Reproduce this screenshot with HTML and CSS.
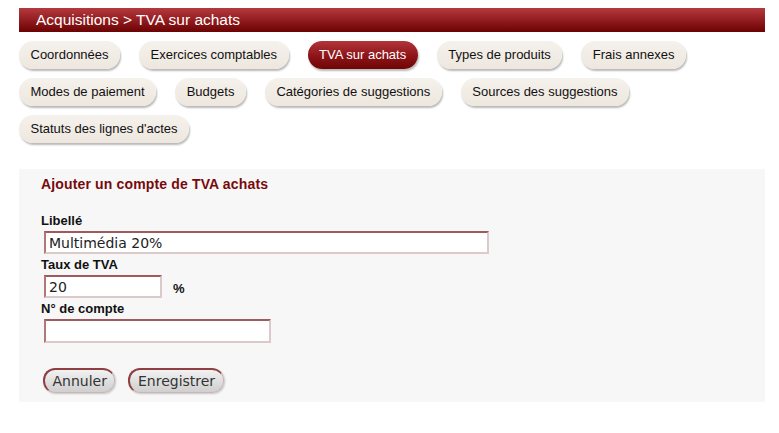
FILE: index.html
```html
<!DOCTYPE html>
<html lang="fr">
<head>
<meta charset="utf-8">
<title>TVA sur achats</title>
<link rel="stylesheet" href="styles.css">
</head>
<body>
<div class="page">
  <div class="titlebar">Acquisitions &gt; TVA sur achats</div>
  <nav class="tabs">
    <a class="tab">Coordonnées</a>
    <a class="tab">Exercices comptables</a>
    <a class="tab active">TVA sur achats</a>
    <a class="tab">Types de produits</a>
    <a class="tab">Frais annexes</a>
    <a class="tab">Modes de paiement</a>
    <a class="tab">Budgets</a>
    <a class="tab">Catégories de suggestions</a>
    <a class="tab">Sources des suggestions</a>
    <a class="tab">Statuts des lignes d'actes</a>
  </nav>
  <form class="panel">
    <h3 class="panel-title">Ajouter un compte de TVA achats</h3>
    <div class="field first">
      <label class="label">Libellé</label>
      <div class="control"><input class="input input-long" type="text" value="Multimédia 20%"></div>
    </div>
    <div class="field">
      <label class="label">Taux de TVA</label>
      <div class="control"><input class="input input-short" type="text" value="20"><span class="unit">%</span></div>
    </div>
    <div class="field">
      <label class="label">N° de compte</label>
      <div class="control"><input class="input input-mid" type="text" value=""></div>
    </div>
    <div class="actions">
      <button type="button" class="btn">Annuler</button>
      <button type="button" class="btn">Enregistrer</button>
    </div>
  </form>
</div>
</body>
</html>
```
FILE: styles.css
```css
html, body {
  margin: 0;
  padding: 0;
  background: #ffffff;
}
body {
  font-family: "Liberation Sans", Arial, sans-serif;
  color: #111;
}
.page {
  margin: 8px 14px 0 19px;
}
.titlebar {
  height: 24px;
  line-height: 24px;
  padding-left: 17px;
  color: #ffffff;
  font-size: 15.5px;
  background: linear-gradient(to bottom, #b4393d 0%, #8f1a1d 55%, #6c0202 100%);
}
.tabs {
  display: flex;
  flex-wrap: wrap;
  column-gap: 19px;
  row-gap: 9px;
  margin-top: 9px;
}
.tab {
  display: block;
  height: 28px;
  line-height: 28px;
  padding: 0 11.5px;
  border-radius: 14px;
  font-size: 13px;
  color: #111;
  background: linear-gradient(to bottom, #f5f1ec 0%, #ede7de 100%);
  box-shadow: 1px 2px 2px rgba(0, 0, 0, 0.28);
  white-space: nowrap;
}
.tab.active {
  color: #ffffff;
  background: linear-gradient(to bottom, #b2353a 0%, #8c1417 55%, #700505 100%);
}
.panel {
  margin: 26px 0 0 0;
  padding: 7px 22px 9px 22px;
  background: #f7f7f7;
}
.panel-title {
  margin: 0;
  font-size: 14px;
  line-height: 16px;
  font-weight: bold;
  letter-spacing: 0.15px;
  color: #780a0c;
}
.field {
  margin-top: 3px;
}
.field.first {
  margin-top: 21px;
}
.label {
  display: block;
  font-size: 13px;
  line-height: 16px;
  font-weight: bold;
  color: #111;
}
.control {
  display: flex;
  align-items: center;
  margin-top: 2px;
  padding-left: 3px;
}
.input {
  box-sizing: border-box;
  height: 23px;
  margin: 0;
  padding: 0 3px;
  font-family: "DejaVu Sans", sans-serif;
  font-size: 14px;
  color: #222;
  background: #ffffff;
  border-style: solid;
  border-width: 2px 2px 2px 2px;
  border-top-color: #9e5a5c;
  border-left-color: #b3777a;
  border-right-color: #dcc9ca;
  border-bottom-color: #dcc9ca;
  outline: none;
}
.input-long { width: 445px; }
.input-short { width: 118px; }
.input-mid { width: 227px; height: 24px; }
.unit {
  margin-left: 11px;
  margin-top: 4px;
  font-size: 13px;
  font-weight: bold;
}
.actions {
  display: flex;
  column-gap: 13px;
  margin-top: 25px;
  padding-left: 2px;
}
.btn {
  box-sizing: border-box;
  height: 25px;
  padding: 0 7.5px;
  border-radius: 12px;
  font-family: "DejaVu Sans", sans-serif;
  font-size: 14px;
  color: #333;
  background: linear-gradient(to bottom, #f2f2f2 0%, #dcdcdc 60%, #cfcfcf 100%);
  border-style: solid;
  border-width: 2px 1px 1px 2px;
  border-top-color: #8f3f42;
  border-left-color: #8f3f42;
  border-right-color: #c9b5b6;
  border-bottom-color: #c9b5b6;
  box-shadow: 1px 1px 2px rgba(0, 0, 0, 0.2);
}
```
